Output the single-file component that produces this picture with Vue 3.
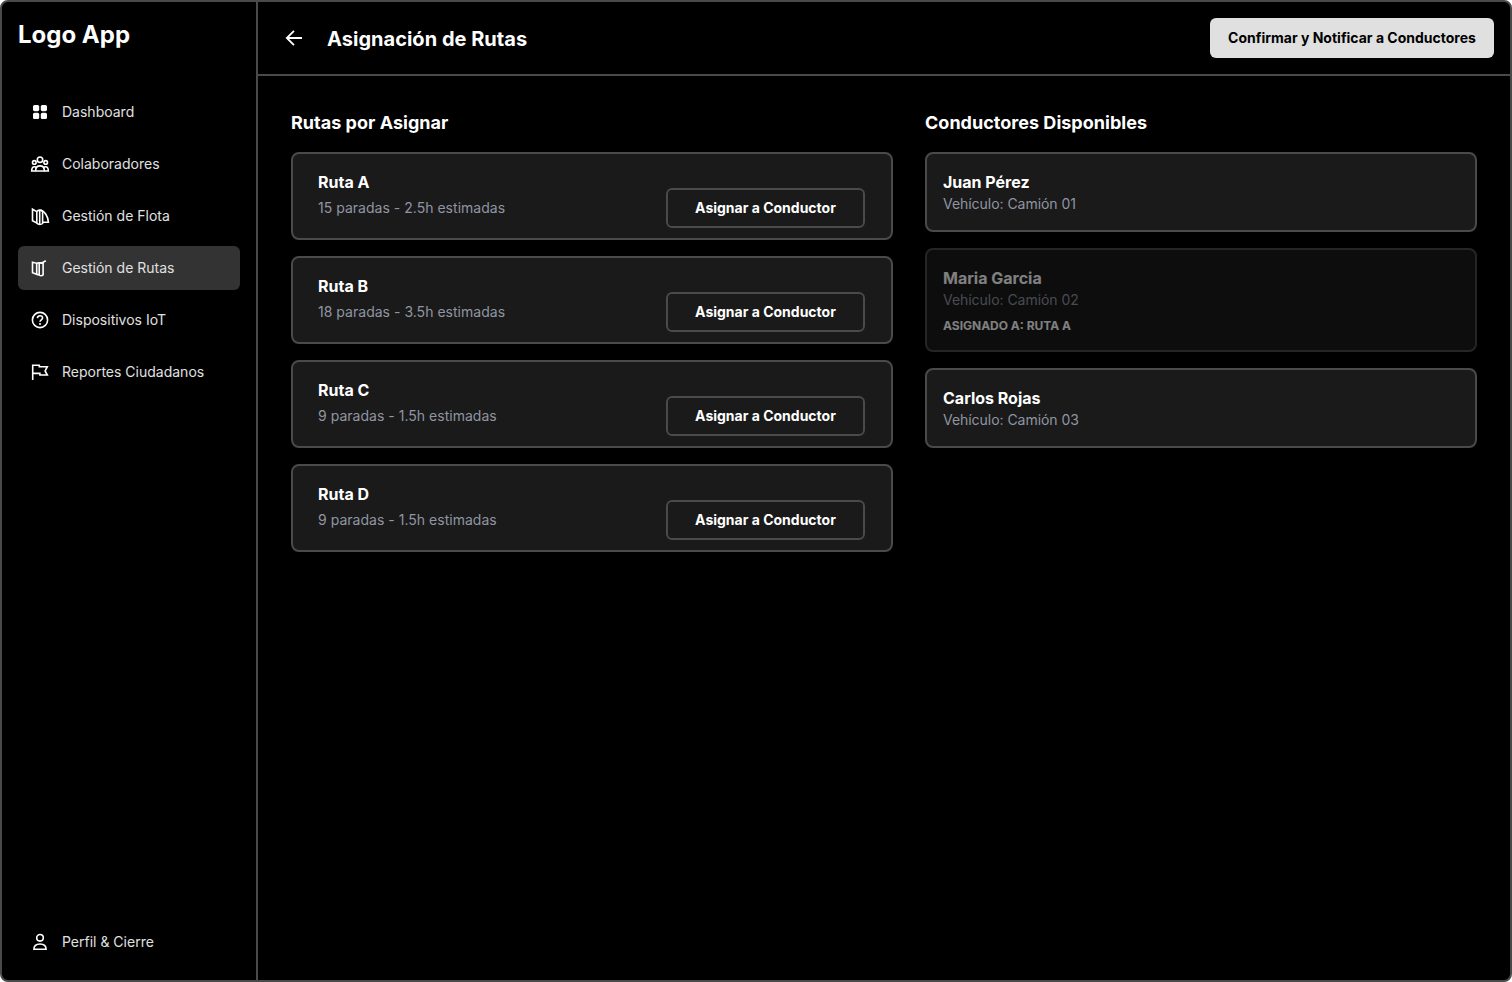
<script setup>
const nav = [
  { label: 'Dashboard', icon: 'grid' },
  { label: 'Colaboradores', icon: 'people' },
  { label: 'Gestión de Flota', icon: 'fleet' },
  { label: 'Gestión de Rutas', icon: 'routes', active: true },
  { label: 'Dispositivos IoT', icon: 'help' },
  { label: 'Reportes Ciudadanos', icon: 'flag' },
]
const routes = [
  { name: 'Ruta A', info: '15 paradas - 2.5h estimadas' },
  { name: 'Ruta B', info: '18 paradas - 3.5h estimadas' },
  { name: 'Ruta C', info: '9 paradas - 1.5h estimadas' },
  { name: 'Ruta D', info: '9 paradas - 1.5h estimadas' },
]
const drivers = [
  { name: 'Juan Pérez', vehicle: 'Vehículo: Camión 01' },
  { name: 'Maria Garcia', vehicle: 'Vehículo: Camión 02', assigned: 'ASIGNADO A: RUTA A' },
  { name: 'Carlos Rojas', vehicle: 'Vehículo: Camión 03' },
]
</script>

<template>
  <div class="window">
    <aside class="sidebar">
      <div class="logo">Logo App</div>
      <nav class="nav">
        <a v-for="item in nav" :key="item.label" class="item" :class="{ active: item.active }">
          <svg class="icon" viewBox="0 0 20 20">
            <g v-if="item.icon === 'grid'" class="solid">
              <rect x="3" y="3" width="6.2" height="6.2" rx="1.6" />
              <rect x="10.8" y="3" width="6.2" height="6.2" rx="1.6" />
              <rect x="3" y="10.8" width="6.2" height="6.2" rx="1.6" />
              <rect x="10.8" y="10.8" width="6.2" height="6.2" rx="1.6" />
            </g>
            <g v-else-if="item.icon === 'people'">
              <circle cx="10" cy="5.7" r="2.7" />
              <circle cx="4.3" cy="8.4" r="1.8" />
              <circle cx="15.7" cy="8.4" r="1.8" />
              <path d="M5.6 17c0-3.1 1.7-5.1 4.4-5.1s4.4 2 4.4 5.1z" />
              <path d="M5.6 17H1.7c0-2.8.8-4.3 2.8-4.3.8 0 1.400.2 1.900.6M14.400 17h3.900c0-2.800-.8-4.300-2.800-4.300-.8 0-1.400.2-1.900.6" />
            </g>
            <g v-else-if="item.icon === 'fleet'">
              <path d="M2.500 3.200v11.500l4.300 2.300V5.600z" />
              <path d="M6.800 5.600C8 3.900 11 3.500 12.600 5.200v12.300c-1.600 1.300-4.200 1.300-5.800-.5M9.700 4.200v14" />
              <path d="M10.500 4.200c4 .6 7.600 6 7.900 12.100h-5.800" />
            </g>
            <g v-else-if="item.icon === 'routes'">
              <path d="M2.500 4.200v10.600l4.200 1.500V5.300z" />
              <path d="M6.700 5.300 9.200 4.800l3.900.6v11.500c-1.300 1-2.900.9-3.900.1l-2.500-.7M9.200 4.800v12.200" />
              <path d="M9.200 4.800h3.200l3.400-2" />
            </g>
            <g v-else-if="item.icon === 'help'">
              <circle cx="10" cy="10" r="7.600" />
              <path d="M7.400 8.100c.1-1.400 1.200-2.300 2.600-2.300 1.500 0 2.600.8 2.600 2.200 0 1.800-2.600 1.900-2.600 3.700" />
              <circle class="solid" cx="10" cy="14" r="1" />
            </g>
            <path v-else d="M2.700 18V3.200h6.600v1.500h8l-2.200 4.200 2.200 4.100H9.900v-1.600H2.700" />
          </svg>
          <span class="label">{{ item.label }}</span>
        </a>
      </nav>
      <a class="item profile">
        <svg class="icon" viewBox="0 0 20 20">
          <circle cx="10" cy="5.800" r="3.300" />
          <path d="M3.900 17.300c0-3.400 2.200-5.300 6.100-5.300s6.100 1.900 6.100 5.300z" />
        </svg>
        <span class="label">Perfil &amp; Cierre</span>
      </a>
    </aside>

    <main class="main">
      <header class="header">
        <svg class="back" viewBox="0 0 20 20"><path d="M18 10H2.800M10 2.800 2.800 10l7.200 7.200" /></svg>
        <h1>Asignación de Rutas</h1>
        <button class="confirm">Confirmar y Notificar a Conductores</button>
      </header>
      <div class="content">
        <section class="routes">
          <h2>Rutas por Asignar</h2>
          <article v-for="r in routes" :key="r.name" class="card route">
            <div class="summary">
              <h3>{{ r.name }}</h3>
              <p>{{ r.info }}</p>
            </div>
            <button class="assign">Asignar a Conductor</button>
          </article>
        </section>
        <section class="drivers">
          <h2>Conductores Disponibles</h2>
          <article v-for="d in drivers" :key="d.name" class="card driver" :class="{ taken: d.assigned }">
            <h3>{{ d.name }}</h3>
            <p>{{ d.vehicle }}</p>
            <strong v-if="d.assigned">{{ d.assigned }}</strong>
          </article>
        </section>
      </div>
    </main>
  </div>
</template>

<style>
html, body { background: #fff; overflow: hidden; }
</style>

<style scoped>
* { box-sizing: border-box; }
.window {
  display: flex;
  width: 1512px;
  height: 982px;
  border: 2px solid #4a4a4a;
  border-radius: 8px;
  background: #000;
  color: #fff;
  font-family: Inter, "Liberation Sans", sans-serif;
  overflow: hidden;
}
h1, h2, h3, p { margin: 0; }
.sidebar {
  width: 256px;
  flex: none;
  display: flex;
  flex-direction: column;
  padding: 16px;
  border-right: 2px solid #4a4a4a;
}
.logo { font-size: 24px; line-height: 34px; font-weight: 700; height: 72px; }
.nav { display: flex; flex-direction: column; gap: 8px; }
.item {
  display: flex;
  align-items: center;
  gap: 12px;
  height: 44px;
  padding: 0 12px;
  border-radius: 6px;
  font-size: 14px;
  font-weight: 400;
  color: #e0e0e0;
}
.label { padding-bottom: 2px; }
.active { background: #333; }
.profile { margin-top: auto; }
.icon { width: 20px; height: 20px; fill: none; stroke: #fff; stroke-width: 1.6; }
.solid { fill: #fff; stroke: none; }
.main { flex: 1; min-width: 0; }
.header {
  display: flex;
  align-items: center;
  height: 74px;
  padding: 0 16px 0 26px;
  border-bottom: 2px solid #4a4a4a;
}
.back { width: 20px; height: 20px; fill: none; stroke: #fff; stroke-width: 1.8; }
h1 { font-size: 20px; line-height: 28px; font-weight: 700; margin-left: 23px; padding-top: 2px; letter-spacing: 0.02px; }
button { font-family: inherit; font-size: 14px; font-weight: 700; padding: 0 0 2px; border-radius: 6px; }
.confirm { margin-left: auto; width: 284px; height: 40px; border: 0; background: #e0e0e0; color: #000; }
.content { display: flex; gap: 32px; padding: 32px 33px; }
.routes, .drivers { display: flex; flex-direction: column; gap: 16px; }
.routes { width: 602px; }
.drivers { width: 552px; }
h2 { font-size: 18px; line-height: 30px; height: 28px; font-weight: 700; letter-spacing: 0.02px; }
.card { border: 2px solid #4a4a4a; border-radius: 8px; background: #1a1a1a; }
.route { display: flex; justify-content: space-between; height: 88px; padding: 16px 26px 10px 25px; }
h3 { font-size: 16px; line-height: 24px; font-weight: 700; }
p { font-size: 14px; line-height: 20px; color: #9095a1; }
.summary p { margin-top: 4px; letter-spacing: 0.02px; }
.assign { align-self: flex-end; width: 199px; height: 40px; border: 2px solid #4a4a4a; background: #1a1a1a; color: #fff; }
.driver { padding: 16px; height: 80px; }
.driver p { letter-spacing: -0.04px; }
.taken { height: 104px; opacity: .5; }
.driver strong { display: block; margin-top: 8px; font-size: 12px; line-height: 16px; }
</style>
